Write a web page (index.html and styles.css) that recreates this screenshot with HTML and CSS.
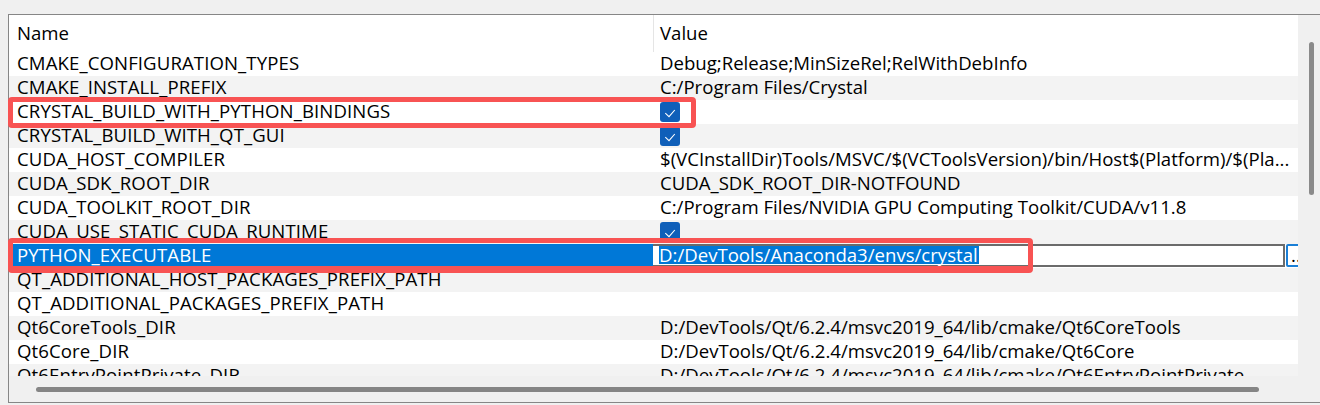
FILE: index.html
```html
<!DOCTYPE html>
<html>
<head>
<meta charset="utf-8">
<link rel="stylesheet" href="styles.css">
</head>
<body>
<div class="screen">
  <div class="frame">
    <div class="view">
      <div class="header"><div class="hname">Name</div><div class="hvalue">Value</div></div>
      <div class="row"><div class="name">CMAKE_CONFIGURATION_TYPES</div><div class="value">Debug;Release;MinSizeRel;RelWithDebInfo</div></div>
      <div class="row alt"><div class="name">CMAKE_INSTALL_PREFIX</div><div class="value">C:/Program Files/Crystal</div></div>
      <div class="row"><div class="name">CRYSTAL_BUILD_WITH_PYTHON_BINDINGS</div><div class="value"><svg class="cb" viewBox="0 0 20 20"><rect width="20" height="20" rx="3" fill="#0f5fb9"/><polyline points="5.3,11.2 9,14.6 14.8,8" fill="none" stroke="#fff" stroke-width="1.1"/></svg></div></div>
      <div class="row alt"><div class="name">CRYSTAL_BUILD_WITH_QT_GUI</div><div class="value"><svg class="cb" viewBox="0 0 20 20"><rect width="20" height="20" rx="3" fill="#0f5fb9"/><polyline points="5.3,11.2 9,14.6 14.8,8" fill="none" stroke="#fff" stroke-width="1.1"/></svg></div></div>
      <div class="row"><div class="name">CUDA_HOST_COMPILER</div><div class="value">$(VCInstallDir)Tools/MSVC/$(VCToolsVersion)/bin/Host$(Platform)/$(Pla...</div></div>
      <div class="row alt"><div class="name">CUDA_SDK_ROOT_DIR</div><div class="value">CUDA_SDK_ROOT_DIR-NOTFOUND</div></div>
      <div class="row"><div class="name">CUDA_TOOLKIT_ROOT_DIR</div><div class="value">C:/Program Files/NVIDIA GPU Computing Toolkit/CUDA/v11.8</div></div>
      <div class="row alt"><div class="name">CUDA_USE_STATIC_CUDA_RUNTIME</div><div class="value"><svg class="cb" viewBox="0 0 20 20"><rect width="20" height="20" rx="3" fill="#0f5fb9"/><polyline points="5.3,11.2 9,14.6 14.8,8" fill="none" stroke="#fff" stroke-width="1.1"/></svg></div></div>
      <div class="row sel"><div class="name">PYTHON_EXECUTABLE</div><div class="edit-cell"><div class="editor"><span class="seltext">D:/DevTools/Anaconda3/envs/crystal</span></div><div class="browse">...</div></div></div>
      <div class="row alt"><div class="name">QT_ADDITIONAL_HOST_PACKAGES_PREFIX_PATH</div><div class="value"></div></div>
      <div class="row"><div class="name">QT_ADDITIONAL_PACKAGES_PREFIX_PATH</div><div class="value"></div></div>
      <div class="row alt"><div class="name">Qt6CoreTools_DIR</div><div class="value">D:/DevTools/Qt/6.2.4/msvc2019_64/lib/cmake/Qt6CoreTools</div></div>
      <div class="row"><div class="name">Qt6Core_DIR</div><div class="value">D:/DevTools/Qt/6.2.4/msvc2019_64/lib/cmake/Qt6Core</div></div>
      <div class="row alt"><div class="name">Qt6EntryPointPrivate_DIR</div><div class="value">D:/DevTools/Qt/6.2.4/msvc2019_64/lib/cmake/Qt6EntryPointPrivate</div></div>
    </div>
    <div class="vscroll"><div class="vthumb"></div></div>
    <div class="hscroll"><div class="hthumb"></div></div>
    <div class="corner"></div>
  </div>
  <div class="mark mark1"></div>
  <div class="mark mark2"></div>
</div>
</body>
</html>
```

FILE: styles.css
```css
html, body {
  margin: 0;
  background: #f0f0f0;
}
body {
  font-family: "Open Sans", "Noto Sans", sans-serif;
  font-size: 18.6px;
  color: #000;
}
.screen {
  position: relative;
  width: 1320px;
  height: 405px;
  overflow: hidden;
  padding: 14px 0 0 8px;
  box-sizing: border-box;
}
.frame {
  display: grid;
  grid-template-columns: 1289px 22px;
  grid-template-rows: 361px 26px;
  width: 1312px;
  box-sizing: border-box;
  border: 1px solid #868686;
  border-right: none;
}
.view {
  background: #fff;
  overflow: hidden;
}
.header {
  display: flex;
  height: 37px;
  line-height: 22px;
}
.hname {
  width: 645px;
  box-sizing: border-box;
  border-right: 1px solid #e5e5e5;
  padding: 7px 0 0 8px;
}
.hvalue {
  padding: 7px 0 0 6px;
}
.row {
  display: grid;
  grid-template-columns: 644px 645px;
  height: 24px;
  line-height: 22px;
  white-space: nowrap;
}
.row.alt {
  background: #f3f3f3;
}
.name {
  padding-left: 8px;
  letter-spacing: 0.1px;
}
.value {
  padding-left: 7px;
}
.cb {
  display: block;
  width: 20px;
  height: 20px;
  margin-top: 2px;
}
.sel .name {
  background: #0078d7;
  color: #fff;
}
.edit-cell {
  display: flex;
  align-items: flex-start;
  overflow: hidden;
  height: 24px;
}
.editor {
  flex: none;
  width: 632px;
  height: 23px;
  box-sizing: border-box;
  border: 2px solid #6b6b6b;
  border-left: none;
  background: #fff;
  padding-left: 6px;
  line-height: 18px;
}
.seltext {
  display: inline-block;
  vertical-align: top;
  height: 18px;
  line-height: 18px;
  padding: 0 1px 0 0;
  background: #0078d7;
  color: #fff;
}
.browse {
  flex: none;
  margin-left: 1px;
  width: 24px;
  height: 23px;
  box-sizing: border-box;
  border: 2px solid #1a7fd6;
  border-radius: 2px;
  background: #fff;
  padding-left: 3px;
  line-height: 18px;
}
.vscroll {
  padding: 27px 0 0 11px;
}
.vthumb {
  width: 5px;
  height: 153px;
  background: #8a8a8a;
  border-radius: 3px;
}
.hscroll {
  padding: 11px 0 0 27px;
}
.hthumb {
  width: 1223px;
  height: 5px;
  background: #858585;
  border-radius: 3px;
}
.mark {
  position: absolute;
  box-sizing: border-box;
  border: 5px solid #f85353;
  border-radius: 4px;
}
.mark1 {
  left: 8px;
  top: 97px;
  width: 688px;
  height: 31px;
}
.mark2 {
  left: 8px;
  top: 238px;
  width: 1025px;
  height: 35px;
  border-bottom-width: 7px;
}
```
